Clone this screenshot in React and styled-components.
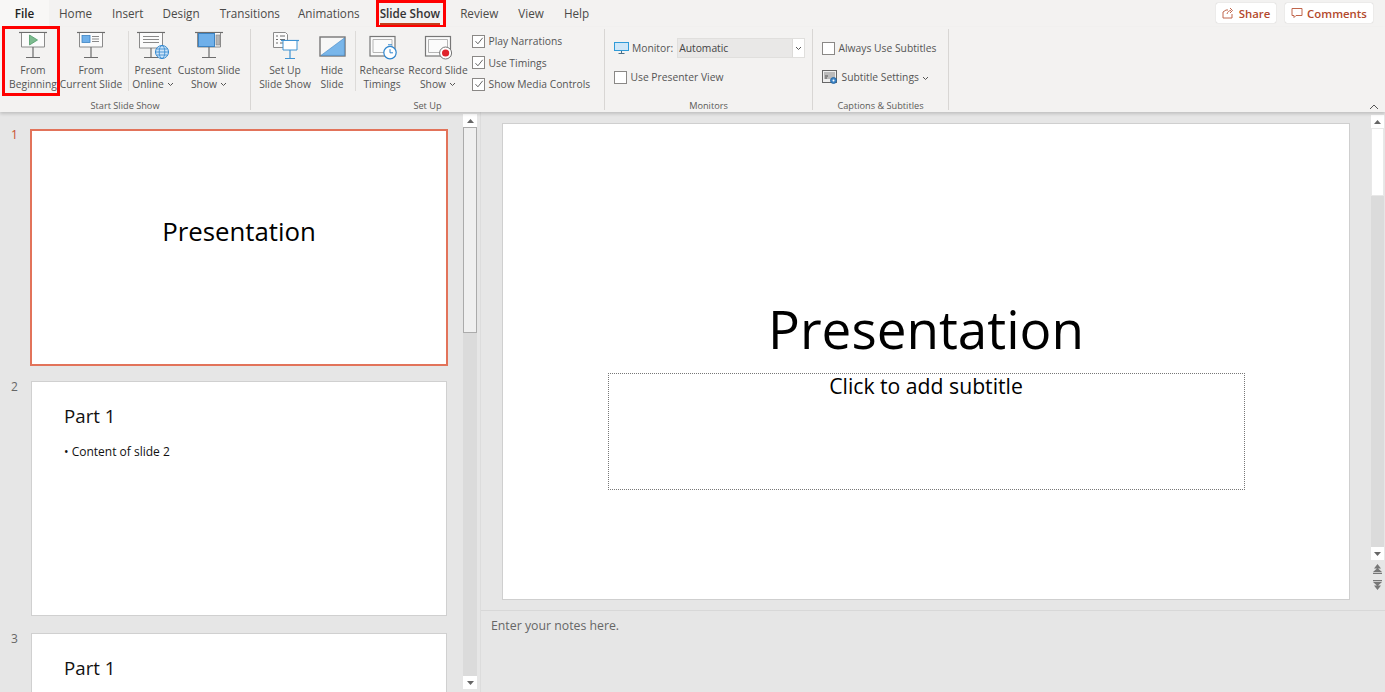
import React from 'react';
import styled, { createGlobalStyle } from 'styled-components';

const GlobalStyle = createGlobalStyle`
  html, body { margin: 0; padding: 0; background: #e6e6e6; }
  body { font-family: "Open Sans", "Noto Sans", sans-serif; overflow: hidden; }
`;

const Page = styled.div`
  width: 1385px;
  height: 692px;
  display: flex;
  flex-direction: column;
  overflow: hidden;
`;

/* top tabs */
const TabBar = styled.div`
  height: 27px;
  flex: none;
  display: flex;
  align-items: center;
  background: #f3f2f1;
  color: #444;
  font-size: 11.7px;
`;
const FileTab = styled.div`
  width: 49px;
  height: 27px;
  box-sizing: border-box;
  padding-bottom: 2px;
  display: flex;
  align-items: center;
  justify-content: center;
  background: #f8f7f6;
  color: #222;
  font-weight: 600;
`;
const Tab = styled.div`
  position: relative;
  height: 27px;
  box-sizing: border-box;
  padding-bottom: 2px;
  display: flex;
  align-items: center;
  margin-left: ${p => p.$gap}px;
  color: ${p => (p.$active ? '#333' : '#4b4a48')};
  font-weight: ${p => (p.$active ? 600 : 400)};
  white-space: nowrap;
`;
const TabLine = styled.span`
  position: absolute;
  left: 0;
  right: 0;
  bottom: 2px;
  height: 2px;
  background: #c43e1c;
`;
const RedBox = styled.span`
  position: absolute;
  top: ${p => p.$top}px;
  left: ${p => p.$left}px;
  width: ${p => p.$width}px;
  height: ${p => p.$height}px;
  border: 3px solid #f00;
  box-sizing: border-box;
  pointer-events: none;
`;
const TabActions = styled.div`
  margin-left: auto;
  display: flex;
  gap: 9px;
  padding: 0 12px 1px 0;
`;
const ActionChip = styled.div`
  width: ${p => p.$width}px;
  height: 20px;
  box-sizing: border-box;
  display: flex;
  align-items: center;
  justify-content: center;
  gap: 4px;
  background: #fff;
  border-radius: 2px;
  box-shadow: 0 0 1px rgba(0, 0, 0, 0.3);
  color: #b3492c;
  font-size: 11.4px;
  font-weight: 600;
`;

/* ribbon */
const Ribbon = styled.div`
  position: relative;
  height: 85px;
  flex: none;
  display: flex;
  background: #f3f2f1;
  box-shadow: 0 2px 3px rgba(0, 0, 0, 0.16);
  z-index: 1;
  color: #555;
  font-size: 10.3px;
`;
const Group = styled.div`
  width: ${p => p.$width}px;
  height: 81px;
  margin-top: 2px;
  flex: none;
  box-sizing: border-box;
  display: flex;
  flex-direction: column;
  border-right: 1px solid #d8d6d4;
`;
const GroupBody = styled.div`
  height: 70px;
  flex: none;
  display: flex;
  padding-left: ${p => p.$pad}px;
`;
const GroupName = styled.div`
  text-align: center;
  font-size: 9.2px;
  line-height: 13px;
  color: #5b5a58;
  white-space: nowrap;
`;
const BigButton = styled.div`
  position: relative;
  width: ${p => p.$width}px;
  flex: none;
  display: flex;
  flex-direction: column;
  align-items: center;
  padding-top: 2px;
  box-sizing: border-box;
`;
const Label = styled.div`
  text-align: center;
  line-height: 14px;
  white-space: nowrap;
  margin-top: 2px;
  svg { margin-left: 3px; vertical-align: 1px; }
`;
const Divider = styled.div`
  width: 1px;
  height: 60px;
  flex: none;
  margin: 2px ${p => p.$right}px 0 ${p => p.$left}px;
  background: #dddbd9;
`;
const CheckColumn = styled.div`
  display: flex;
  flex-direction: column;
  gap: 7.5px;
  margin-left: ${p => p.$left}px;
  padding-top: ${p => p.$top}px;
`;
const CheckRow = styled.div`
  display: flex;
  align-items: center;
  gap: 3.5px;
  height: 14px;
  white-space: nowrap;
`;
const Box = styled.span`
  width: 13px;
  height: 13px;
  box-sizing: border-box;
  flex: none;
  background: #fff;
  border: 1px solid #8a8886;
  display: flex;
  align-items: center;
  justify-content: center;
`;
const StackColumn = styled.div`
  display: flex;
  flex-direction: column;
  gap: ${p => p.$gap}px;
  padding-top: ${p => p.$top}px;
`;
const MonitorRow = styled.div`
  display: flex;
  align-items: center;
  height: 20px;
  white-space: nowrap;
  gap: 3px;
`;
const Select = styled.div`
  width: 128px;
  height: 20px;
  margin-left: 1px;
  box-sizing: border-box;
  border: 1px solid #e0dfdd;
  background: #e9e8e7;
  display: flex;
  align-items: center;
  padding-left: 1px;
  color: #444;
`;
const SelectArrow = styled.span`
  margin-left: auto;
  width: 11px;
  height: 18px;
  background: #fff;
  border-left: 1px solid #dcdbd9;
  display: flex;
  align-items: center;
  justify-content: center;
`;
const Collapse = styled.span`
  position: absolute;
  right: 6px;
  bottom: 2px;
  display: flex;
`;

/* work area */
const Workspace = styled.div`
  flex: 1;
  min-height: 0;
  display: flex;
  background: #e6e6e6;
`;
const ThumbPane = styled.div`
  width: 463px;
  flex: none;
  display: flex;
  flex-direction: column;
  gap: 17px;
  padding-top: 17px;
  box-sizing: border-box;
  overflow: hidden;
`;
const ThumbRow = styled.div`
  display: flex;
  flex: none;
  height: 235px;
`;
const ThumbNumber = styled.div`
  width: 30px;
  flex: none;
  padding-left: 11px;
  box-sizing: border-box;
  font-size: 12px;
  line-height: 12px;
  color: ${p => (p.$active ? '#c8502f' : '#666')};
`;
const Thumb = styled.div`
  width: ${p => (p.$active ? 418 : 416)}px;
  height: ${p => (p.$active ? 237 : 235)}px;
  flex: none;
  box-sizing: border-box;
  background: #fff;
  border: ${p => (p.$active ? '2px solid #e2735a' : '1px solid #d0d0d0')};
  margin-left: ${p => (p.$active ? 0 : 1)}px;
`;
const ThumbTitle = styled.div`
  text-align: center;
  font-size: 25.8px;
  line-height: 36px;
  padding-top: 82px;
  color: #000;
`;
const PartBody = styled.div`
  padding: 21px 0 0 32px;
  color: #111;
`;
const PartHeading = styled.div`
  font-size: 18.7px;
  line-height: 26px;
`;
const PartBullet = styled.div`
  font-size: 12px;
  line-height: 16px;
  margin-top: 15px;
`;
const Scrollbar = styled.div`
  width: ${p => p.$width}px;
  flex: none;
  display: flex;
  flex-direction: column;
  background: #dbdbdb;
  margin-top: ${p => p.$top}px;
  margin-bottom: ${p => p.$bottom}px;
  margin-right: ${p => p.$right || 0}px;
`;
const ScrollButton = styled.div`
  height: 13px;
  flex: none;
  background: #fff;
  display: flex;
  align-items: center;
  justify-content: center;
  margin-top: ${p => (p.$end ? 'auto' : 0)};
`;
const ScrollThumb = styled.div`
  height: ${p => p.$height}px;
  flex: none;
  box-sizing: border-box;
  background: ${p => (p.$plain ? '#fff' : '#f0f0f0')};
  border: 1px solid ${p => (p.$plain ? '#e8e8e8' : '#ababab')};
`;
const NavButtons = styled.div`
  height: 42px;
  flex: none;
  background: #e6e6e6;
  display: flex;
  flex-direction: column;
  align-items: center;
  gap: 6px;
  padding-top: 4px;
  box-sizing: border-box;
`;
const EditorPane = styled.div`
  flex: 1;
  min-width: 0;
  display: flex;
  flex-direction: column;
  margin-left: 3px;
  border-left: 1px solid #dcdcdc;
`;
const EditorMain = styled.div`
  height: 499px;
  flex: none;
  display: flex;
  box-sizing: border-box;
  border-bottom: 1px solid #d8d8d8;
`;
const SlideArea = styled.div`
  flex: 1;
  padding: 11px 21px 10px 21px;
  box-sizing: border-box;
`;
const Slide = styled.div`
  height: 100%;
  box-sizing: border-box;
  background: #fff;
  border: 1px solid #cfcfcf;
  display: flex;
  flex-direction: column;
  align-items: center;
  padding-top: 167px;
  color: #000;
`;
const SlideTitle = styled.div`
  font-size: 53px;
  line-height: 76px;
  white-space: nowrap;
`;
const SubtitleBox = styled.div`
  width: 637px;
  height: 117px;
  margin-top: 6px;
  box-sizing: border-box;
  border: 1px dotted #777;
  text-align: center;
  font-size: 21.2px;
  line-height: 24px;
`;
const Notes = styled.div`
  flex: 1;
  padding: 6px 0 0 10px;
  font-size: 12.3px;
  line-height: 17px;
  color: #666;
`;

function Chevron({ color = '#555' }) {
  return (
    <svg width="7" height="5" viewBox="0 0 7 5" fill="none">
      <path d="M1 1l2.5 2.5L6 1" stroke={color} strokeWidth="1" />
    </svg>
  );
}

function Check() {
  return (
    <svg width="10" height="10" viewBox="0 0 10 10" fill="none">
      <path d="M1.5 5.2l2.4 2.6 4.8-6" stroke="#666" strokeWidth="1" />
    </svg>
  );
}

function CheckItem({ checked, children }) {
  return (
    <CheckRow>
      <Box>{checked && <Check />}</Box>
      {children}
    </CheckRow>
  );
}

function ScreenStand({ children, stem = '#6d6d6d' }) {
  return (
    <svg width="30" height="30" viewBox="0 0 30 30" fill="none">
      <path d="M1 1.5h28" stroke="#6d6d6d" strokeWidth="1.2" />
      <path d="M3.5 2v14h23V2" fill="#fbfbfb" stroke="#8a8a8a" />
      <path d="M15 16v10M8 26.5h14" stroke={stem} strokeWidth="1.2" />
      {children}
    </svg>
  );
}

const PlayIcon = () => (
  <ScreenStand>
    <path d="M11.5 4l8 5-8 5z" fill="#7dbb8f" stroke="#4f9a68" strokeWidth=".8" />
  </ScreenStand>
);

const CurrentIcon = () => (
  <ScreenStand>
    <rect x="6" y="4.5" width="8" height="7" fill="#6fb0ea" stroke="#3c83c2" strokeWidth=".8" />
    <path d="M16 5.5h7M16 8h7M16 10.5h7" stroke="#8a8a8a" />
  </ScreenStand>
);

const OnlineIcon = () => (
  <svg width="34" height="30" viewBox="0 0 34 30" fill="none">
    <path d="M1 1.5h28" stroke="#6d6d6d" strokeWidth="1.2" />
    <path d="M3.5 2v15h23V2" fill="#fbfbfb" stroke="#8a8a8a" />
    <path d="M7 5.5h16M7 8.5h16M7 11.5h16" stroke="#8a8a8a" />
    <path d="M15 17v9M8 26.5h14" stroke="#6d6d6d" strokeWidth="1.2" />
    <circle cx="26" cy="21" r="6.5" fill="#cfe5f8" stroke="#2f86cf" />
    <ellipse cx="26" cy="21" rx="2.8" ry="6.5" stroke="#2f86cf" strokeWidth=".8" />
    <path d="M19.5 21h13M20.5 18h11M20.5 24h11" stroke="#2f86cf" strokeWidth=".8" />
  </svg>
);

const CustomIcon = () => (
  <ScreenStand>
    <rect x="4.5" y="2.5" width="16" height="13" fill="#6fb0ea" stroke="#3c83c2" />
    <rect x="22" y="4" width="4" height="10" fill="#b5b5b5" stroke="#8a8a8a" strokeWidth=".7" />
  </ScreenStand>
);

const SetUpIcon = () => (
  <svg width="30" height="30" viewBox="0 0 30 30" fill="none">
    <path d="M3.5 1.5h12l2 2v13h-14z" fill="#fbfbfb" stroke="#8a8a8a" />
    <path d="M6 5h2M10 5h5M6 8.5h2M10 8.5h5M6 12h2M10 12h3" stroke="#6d6d6d" />
    <path d="M11 9.5h18" stroke="#3f93d3" strokeWidth="1.2" />
    <path d="M13 10v9h14v-9" fill="#fff" stroke="#3f93d3" />
    <path d="M20 19v8M15 27.5h10" stroke="#3f93d3" strokeWidth="1.2" />
  </svg>
);

const HideIcon = () => (
  <svg width="28" height="30" viewBox="-1 -5 28 30" fill="none">
    <rect x="1" y="1" width="25" height="19" fill="#f7f7f7" stroke="#777" strokeWidth="1.4" />
    <path d="M2 19.4L25.4 2v17.4z" fill="#79b6ea" stroke="#3c83c2" strokeWidth=".6" />
  </svg>
);

const RehearseIcon = () => (
  <svg width="32" height="30" viewBox="-3 -4 32 30" fill="none">
    <rect x="1" y="1.5" width="25" height="19.5" fill="#fbfbfb" stroke="#777" strokeWidth="1.2" />
    <path d="M4 4.5h19v13H4z" stroke="#b5b5b5" />
    <circle cx="21" cy="17.6" r="6.2" fill="#fff" stroke="#2f86cf" strokeWidth="1.2" />
    <path d="M21 14.2v3.6h3M19 9.8h4" stroke="#2f86cf" />
  </svg>
);

const RecordIcon = () => (
  <svg width="32" height="30" viewBox="-3 -4 32 30" fill="none">
    <rect x=".5" y="1.5" width="25" height="19.5" fill="#fbfbfb" stroke="#777" strokeWidth="1.2" />
    <path d="M3.5 4.5h19v13h-19z" stroke="#b5b5b5" />
    <circle cx="20.6" cy="18" r="6" fill="#fff" stroke="#777" />
    <circle cx="20.6" cy="18" r="3.6" fill="#e0242c" />
  </svg>
);

const MonitorIcon = () => (
  <svg width="15" height="12" viewBox="0 0 15 12" fill="none">
    <rect x=".5" y=".5" width="14" height="8" fill="#cfe7f8" stroke="#2f9bd8" />
    <path d="M7.5 9v2M4.5 11.5h6" stroke="#4a6f88" />
  </svg>
);

const SubtitleIcon = () => (
  <svg width="16" height="15" viewBox="0 0 16 15" fill="none">
    <rect x=".5" y=".5" width="14" height="12" fill="#eee" stroke="#666" />
    <rect x="2" y="2" width="11" height="7" fill="#bbb" />
    <path d="M3 6h3M3 8h2" stroke="#555" />
    <circle cx="11.5" cy="10.5" r="3" fill="#3f86c6" stroke="#1f5f9c" strokeWidth=".8" />
    <circle cx="11.5" cy="10.5" r="1" fill="#fff" />
  </svg>
);

const ShareIcon = () => (
  <svg width="13" height="12" viewBox="0 0 13 12" fill="none">
    <path d="M1 5v6h9V7M1 5l3-2h2" stroke="#c0664c" />
    <path d="M5 7c.5-2 2-3.5 4-3.5M8 1l2.5 2.5L8 6" stroke="#c0664c" />
  </svg>
);

const CommentIcon = () => (
  <svg width="12" height="12" viewBox="0 0 12 12" fill="none">
    <path d="M1 1.5h10v7H5l-2 2v-2H1z" stroke="#c0664c" />
  </svg>
);

function Arrow({ down }) {
  return (
    <svg width="7" height="4" viewBox="0 0 7 4">
      <path d={down ? 'M0 0h7L3.5 4z' : 'M0 4h7L3.5 0z'} fill="#666" />
    </svg>
  );
}

function DoubleArrow({ down }) {
  return (
    <svg width="9" height="10" viewBox="0 0 9 10">
      <path
        d={down ? 'M0 0h9v1.2H0zM0 2h9L4.5 6zM1 5.5h7L4.5 10z' : 'M0 8.8h9V10H0zM0 8h9L4.5 4zM1 4.5h7L4.5 0z'}
        fill="#777"
      />
    </svg>
  );
}

const tabs = [
  ['Home', 10], ['Insert', 20], ['Design', 19], ['Transitions', 20], ['Animations', 18],
];

function Tabs() {
  return (
    <TabBar>
      <FileTab>File</FileTab>
      {tabs.map(([name, gap]) => <Tab key={name} $gap={gap}>{name}</Tab>)}
      <Tab $gap={20} $active>
        Slide Show
        <TabLine />
        <RedBox $top={0} $left={-4} $width={70} $height={28} />
      </Tab>
      <Tab $gap={20}>Review</Tab>
      <Tab $gap={20}>View</Tab>
      <Tab $gap={20}>Help</Tab>
      <TabActions>
        <ActionChip $width={60}><ShareIcon />Share</ActionChip>
        <ActionChip $width={88}><CommentIcon />Comments</ActionChip>
      </TabActions>
    </TabBar>
  );
}

function RibbonBar() {
  return (
    <Ribbon>
      <Group $width={251}>
        <GroupBody $pad={4}>
          <BigButton $width={58}>
            <PlayIcon />
            <Label>From<br />Beginning</Label>
            <RedBox $top={-3} $left={-2} $width={58} $height={70} />
          </BigButton>
          <BigButton $width={58}>
            <CurrentIcon />
            <Label>From<br />Current Slide</Label>
          </BigButton>
          <Divider $left={8} $right={1} />
          <BigButton $width={46}>
            <OnlineIcon />
            <Label>Present<br />Online<Chevron /></Label>
          </BigButton>
          <BigButton $width={66}>
            <CustomIcon />
            <Label>Custom Slide<br />Show<Chevron /></Label>
          </BigButton>
        </GroupBody>
        <GroupName>Start Slide Show</GroupName>
      </Group>
      <Group $width={354}>
        <GroupBody $pad={3}>
          <BigButton $width={62}>
            <SetUpIcon />
            <Label>Set Up<br />Slide Show</Label>
          </BigButton>
          <BigButton $width={32}>
            <HideIcon />
            <Label>Hide<br />Slide</Label>
          </BigButton>
          <Divider $left={7} $right={3} />
          <BigButton $width={46}>
            <RehearseIcon />
            <Label>Rehearse<br />Timings</Label>
          </BigButton>
          <BigButton $width={66}>
            <RecordIcon />
            <Label>Record Slide<br />Show<Chevron /></Label>
          </BigButton>
          <CheckColumn $left={1} $top={5}>
            <CheckItem checked>Play Narrations</CheckItem>
            <CheckItem checked>Use Timings</CheckItem>
            <CheckItem checked>Show Media Controls</CheckItem>
          </CheckColumn>
        </GroupBody>
        <GroupName>Set Up</GroupName>
      </Group>
      <Group $width={208}>
        <GroupBody $pad={9}>
          <StackColumn $gap={12} $top={9}>
            <MonitorRow>
              <MonitorIcon />Monitor:
              <Select>Automatic<SelectArrow><Chevron /></SelectArrow></Select>
            </MonitorRow>
            <CheckItem>Use Presenter View</CheckItem>
          </StackColumn>
        </GroupBody>
        <GroupName>Monitors</GroupName>
      </Group>
      <Group $width={136}>
        <GroupBody $pad={9}>
          <StackColumn $gap={15} $top={12}>
            <CheckItem>Always Use Subtitles</CheckItem>
            <CheckRow>
              <SubtitleIcon />
              <span>Subtitle Settings <Chevron /></span>
            </CheckRow>
          </StackColumn>
        </GroupBody>
        <GroupName>Captions &amp; Subtitles</GroupName>
      </Group>
      <Collapse>
        <svg width="10" height="6" viewBox="0 0 10 6" fill="none">
          <path d="M1 5l4-4 4 4" stroke="#555" />
        </svg>
      </Collapse>
    </Ribbon>
  );
}

function PartSlide({ bullet }) {
  return (
    <PartBody>
      <PartHeading>Part 1</PartHeading>
      {bullet && <PartBullet>• {bullet}</PartBullet>}
    </PartBody>
  );
}

export default function App() {
  return (
    <Page>
      <GlobalStyle />
      <Tabs />
      <RibbonBar />
      <Workspace>
        <ThumbPane>
          <ThumbRow>
            <ThumbNumber $active>1</ThumbNumber>
            <Thumb $active><ThumbTitle>Presentation</ThumbTitle></Thumb>
          </ThumbRow>
          <ThumbRow>
            <ThumbNumber>2</ThumbNumber>
            <Thumb><PartSlide bullet="Content of slide 2" /></Thumb>
          </ThumbRow>
          <ThumbRow>
            <ThumbNumber>3</ThumbNumber>
            <Thumb><PartSlide /></Thumb>
          </ThumbRow>
        </ThumbPane>
        <Scrollbar $width={14} $top={2} $bottom={3}>
          <ScrollButton><Arrow /></ScrollButton>
          <ScrollThumb $height={206} />
          <ScrollButton $end><Arrow down /></ScrollButton>
        </Scrollbar>
        <EditorPane>
          <EditorMain>
            <SlideArea>
              <Slide>
                <SlideTitle>Presentation</SlideTitle>
                <SubtitleBox>Click to add subtitle</SubtitleBox>
              </Slide>
            </SlideArea>
            <Scrollbar $width={13} $right={1} $top={3} $bottom={8}>
              <ScrollButton><Arrow /></ScrollButton>
              <ScrollThumb $plain $height={68} />
              <ScrollButton $end><Arrow down /></ScrollButton>
              <NavButtons>
                <DoubleArrow />
                <DoubleArrow down />
              </NavButtons>
            </Scrollbar>
          </EditorMain>
          <Notes>Enter your notes here.</Notes>
        </EditorPane>
      </Workspace>
    </Page>
  );
}
